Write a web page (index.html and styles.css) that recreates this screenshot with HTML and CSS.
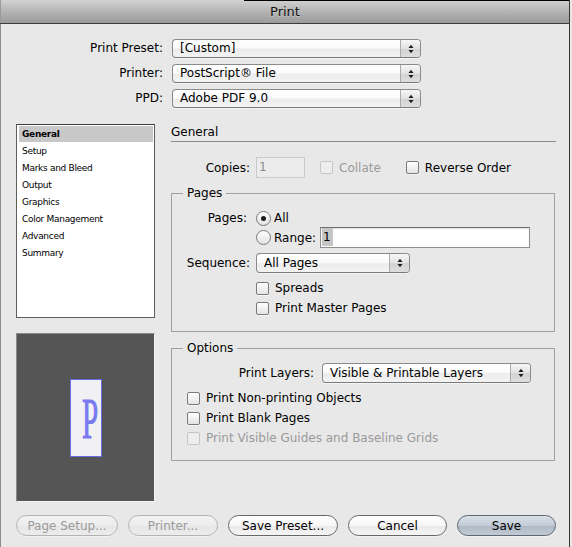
FILE: index.html
```html
<!DOCTYPE html>
<html lang="en">
<head>
<meta charset="utf-8">
<title>Print</title>
<link rel="stylesheet" href="styles.css">
</head>
<body>
<div class="window">
  <div class="titlebar">Print</div>

  <div class="presets">
    <span class="plabel">Print Preset:</span>
    <div class="popup"><span class="popup-text">[Custom]</span><span class="popup-arrows"><svg class="updown" viewBox="0 0 6 10" width="6" height="10"><polygon points="0.5,4 5.5,4 3,0.8"/><polygon points="0.5,6 5.5,6 3,9.2"/></svg></span></div>
    <span class="plabel">Printer:</span>
    <div class="popup"><span class="popup-text">PostScript® File</span><span class="popup-arrows"><svg class="updown" viewBox="0 0 6 10" width="6" height="10"><polygon points="0.5,4 5.5,4 3,0.8"/><polygon points="0.5,6 5.5,6 3,9.2"/></svg></span></div>
    <span class="plabel">PPD:</span>
    <div class="popup"><span class="popup-text">Adobe PDF 9.0</span><span class="popup-arrows"><svg class="updown" viewBox="0 0 6 10" width="6" height="10"><polygon points="0.5,4 5.5,4 3,0.8"/><polygon points="0.5,6 5.5,6 3,9.2"/></svg></span></div>
  </div>

  <div class="main">
    <div class="leftcol">
      <ul class="navlist">
        <li class="selected">General</li>
        <li>Setup</li>
        <li>Marks and Bleed</li>
        <li>Output</li>
        <li>Graphics</li>
        <li>Color Management</li>
        <li>Advanced</li>
        <li>Summary</li>
      </ul>
      <div class="preview">
        <div class="page"><span class="page-glyph">P</span></div>
      </div>
    </div>

    <div class="rightcol">
      <div class="section-title">General</div>

      <div class="copies-row">
        <span class="clabel">Copies:</span>
        <div class="textfield textfield-disabled copies-field">1</div>
        <span class="cb cb-disabled collate-cb"></span>
        <span class="cb-text disabled-text">Collate</span>
        <span class="cb reverse-cb"></span>
        <span class="cb-text">Reverse Order</span>
      </div>

      <fieldset class="group pages-group">
        <legend>Pages</legend>
        <div class="frow frow-pages">
          <span class="flabel flabel-pages">Pages:</span>
          <span class="radio radio-on"></span>
          <span class="radio-text">All</span>
        </div>
        <div class="frow frow-range">
          <span class="flabel"></span>
          <span class="radio"></span>
          <span class="radio-text">Range:</span>
          <div class="textfield range-field"><span class="sel">1</span></div>
        </div>
        <div class="frow frow-seq">
          <span class="flabel">Sequence:</span>
          <div class="popup seq-popup"><span class="popup-text">All Pages</span><span class="popup-arrows"><svg class="updown" viewBox="0 0 6 10" width="6" height="10"><polygon points="0.5,4 5.5,4 3,0.8"/><polygon points="0.5,6 5.5,6 3,9.2"/></svg></span></div>
        </div>
        <div class="frow frow-check frow-spreads">
          <span class="flabel"></span>
          <span class="cb"></span>
          <span class="cb-text">Spreads</span>
        </div>
        <div class="frow frow-check frow-master">
          <span class="flabel"></span>
          <span class="cb"></span>
          <span class="cb-text">Print Master Pages</span>
        </div>
      </fieldset>

      <fieldset class="group options-group">
        <legend>Options</legend>
        <div class="layers-row">
          <span class="layers-label">Print Layers:</span>
          <div class="popup layers-popup"><span class="popup-text">Visible &amp; Printable Layers</span><span class="popup-arrows"><svg class="updown" viewBox="0 0 6 10" width="6" height="10"><polygon points="0.5,4 5.5,4 3,0.8"/><polygon points="0.5,6 5.5,6 3,9.2"/></svg></span></div>
        </div>
        <div class="orow orow-first"><span class="cb"></span><span class="cb-text">Print Non-printing Objects</span></div>
        <div class="orow"><span class="cb"></span><span class="cb-text">Print Blank Pages</span></div>
        <div class="orow"><span class="cb cb-disabled"></span><span class="cb-text disabled-text">Print Visible Guides and Baseline Grids</span></div>
      </fieldset>
    </div>
  </div>

  <div class="buttons">
    <button class="btn btn-disabled btn-pagesetup">Page Setup...</button>
    <button class="btn btn-disabled btn-printer">Printer...</button>
    <button class="btn btn-savepreset">Save Preset...</button>
    <button class="btn btn-cancel">Cancel</button>
    <button class="btn btn-default btn-save">Save</button>
  </div>
</div>
</body>
</html>
```

FILE: styles.css
```css
html, body {
  margin: 0;
  padding: 0;
  background: #e8e8e8;
}

body {
  font-family: "DejaVu Sans", "Liberation Sans", sans-serif;
  font-size: 12px;
  color: #000;
}

.window {
  width: 570px;
  height: 547px;
  background: #e8e8e8;
  box-shadow: inset 1px 0 0 #8c8c8c, inset -1px 0 0 #363636;
  overflow: hidden;
}

/* ---------- title bar ---------- */
.titlebar {
  height: 23px;
  line-height: 23px;
  text-align: center;
  font-size: 13px;
  color: #111;
  text-shadow: 0 1px 0 rgba(255, 255, 255, 0.35);
  border-bottom: 1px solid #3c3c3c;
  background:
    linear-gradient(to right, transparent 244px, #000 244px) top / 100% 1px no-repeat,
    linear-gradient(#d2d2d2, #b4b4b4 50%, #9b9b9b);
  box-shadow: inset 1px 0 0 #9a9a9a, inset -1px 0 0 #363636;
}

/* ---------- preset popups ---------- */
.presets {
  display: grid;
  grid-template-columns: 163px 249px;
  grid-auto-rows: 19px;
  column-gap: 9px;
  row-gap: 6px;
  padding-top: 15px;
}

.plabel {
  text-align: right;
  line-height: 19px;
  white-space: nowrap;
}

.popup {
  display: flex;
  height: 19px;
  box-sizing: border-box;
  border: 1px solid #8a8a8a;
  border-bottom-color: #7a7a7a;
  border-radius: 4px;
  background: linear-gradient(#ffffff, #fbfbfb 45%, #ececec 55%, #f3f3f3);
  box-shadow: 0 1px 0 rgba(255, 255, 255, 0.5);
}

.popup-text {
  flex: 1;
  padding-left: 7px;
  line-height: 17px;
  white-space: nowrap;
  overflow: hidden;
}

.popup-arrows {
  width: 19px;
  flex: none;
  border-left: 1px solid #ababab;
  border-radius: 0 3px 3px 0;
  background: linear-gradient(#f6f6f6, #e2e2e2 50%, #d2d2d2 51%, #dedede);
  display: flex;
  align-items: center;
  justify-content: center;
}

.updown {
  display: block;
  fill: #1e1e1e;
}

/* ---------- main area ---------- */
.main {
  display: flex;
  margin-top: 16px;
  padding-left: 16px;
}

.leftcol {
  width: 139px;
  flex: none;
}

.navlist {
  list-style: none;
  margin: 0;
  padding: 1px 1px 0 2px;
  height: 194px;
  box-sizing: border-box;
  border: 1px solid #5e5e5e;
  border-top-color: #3c3c3c;
  background: #fff;
  font-size: 9px;
  letter-spacing: -0.3px;
}

.navlist li {
  height: 16px;
  line-height: 16px;
  margin-bottom: 1px;
  padding-left: 3px;
  white-space: nowrap;
}

.navlist li.selected {
  background: #c8c8c8;
  font-weight: bold;
}

.preview {
  margin-top: 15px;
  height: 169px;
  box-sizing: border-box;
  border: 1px solid;
  border-color: #8a8a8a #f4f4f4 #f4f4f4 #8a8a8a;
  background: #555555;
  display: flex;
  align-items: center;
  justify-content: center;
}

.page {
  width: 32px;
  height: 78px;
  box-sizing: border-box;
  border: 1px solid #6a6ae6;
  background: #f1f1f3;
  display: flex;
  align-items: center;
  justify-content: center;
}

.page-glyph {
  display: block;
  width: 16px;
  text-align: center;
  font-family: "Liberation Serif", "DejaVu Serif", serif;
  font-size: 58px;
  line-height: 42px;
  height: 42px;
  color: #7a7af0;
  transform: scale(0.5, 1);
  -webkit-text-stroke: 1.2px #7a7af0;
  margin-top: 2px;
}

.rightcol {
  width: 385px;
  margin-left: 16px;
  flex: none;
}

.section-title {
  height: 17px;
  line-height: 17px;
  border-bottom: 1px solid #8b8b8b;
}

/* ---------- copies ---------- */
.copies-row {
  display: flex;
  align-items: center;
  height: 21px;
  margin-top: 15px;
}

.clabel {
  width: 79px;
  text-align: right;
  margin-right: 6px;
  flex: none;
}

.textfield {
  height: 21px;
  box-sizing: border-box;
  border: 1px solid #8f8f8f;
  border-top-color: #6e6e6e;
  background: #fff;
  box-shadow: inset 0 1px 1px rgba(0, 0, 0, 0.12);
  line-height: 19px;
  padding-left: 2px;
  flex: none;
}

.textfield-disabled {
  border-color: #cacaca;
  background: #ececec;
  color: #8a8a8a;
  box-shadow: none;
}

.copies-field {
  width: 49px;
}

.collate-cb {
  margin-left: 15px;
}

.reverse-cb {
  margin-left: 25px;
}

/* ---------- checkboxes & radios ---------- */
.cb {
  width: 13px;
  height: 13px;
  box-sizing: border-box;
  border: 1px solid #7a7a7a;
  border-radius: 2px;
  background: linear-gradient(#ffffff, #f1f1f1 50%, #e4e4e4);
  box-shadow: 0 1px 0 rgba(255, 255, 255, 0.6);
  flex: none;
}

.cb-disabled {
  border-color: #c6c6c6;
  background: #eeeeee;
  box-shadow: none;
}

.cb-text {
  margin-left: 6px;
  white-space: nowrap;
}

.disabled-text {
  color: #9a9a9a;
}

.radio {
  width: 15px;
  height: 15px;
  box-sizing: border-box;
  border: 1px solid #7a7a7a;
  border-radius: 50%;
  background: linear-gradient(#ffffff, #f0f0f0 50%, #e2e2e2);
  flex: none;
  display: flex;
  align-items: center;
  justify-content: center;
}

.radio-on::after {
  content: "";
  width: 5px;
  height: 5px;
  border-radius: 50%;
  background: #1c1c1c;
}

.radio-text {
  margin-left: 3px;
  white-space: nowrap;
}

/* ---------- group boxes ---------- */
.group {
  margin: 0 1px 0 0;
  padding: 9px 0 14px;
  border: 1px solid #a0a0a0;
  min-width: 0;
}

.group legend {
  padding: 0 4px;
  margin-left: 11px;
  line-height: 14px;
  font-size: 12px;
}

.pages-group {
  margin-top: 8px;
}

.options-group {
  margin-top: 9px;
  padding-top: 8px;
  padding-bottom: 12px;
}

.frow {
  display: flex;
  align-items: center;
}

.flabel {
  width: 78px;
  margin-right: 6px;
  text-align: right;
  flex: none;
  white-space: nowrap;
}

.flabel-pages {
  width: 75px;
  margin-right: 9px;
}

.frow-pages {
  height: 18px;
}

.frow-range {
  height: 21px;
}

.range-field {
  width: 210px;
  margin-left: 4px;
  padding-left: 1px;
}

.sel {
  display: inline-block;
  background: #c6c6c6;
  padding: 0 2px 0 1px;
  line-height: 18px;
}

.frow-seq {
  height: 20px;
  margin-top: 5px;
}

.seq-popup {
  width: 154px;
  height: 20px;
}

.seq-popup .popup-text {
  line-height: 18px;
}

.frow-check {
  height: 18px;
}

.frow-spreads {
  margin-top: 6px;
}

.frow-master {
  margin-top: 2px;
}

.layers-row {
  display: flex;
  align-items: center;
  justify-content: flex-end;
  height: 20px;
  padding-right: 23px;
}

.layers-label {
  margin-right: 8px;
  white-space: nowrap;
}

.layers-popup {
  width: 209px;
  height: 20px;
}

.layers-popup .popup-text {
  line-height: 18px;
}

.orow {
  display: flex;
  align-items: center;
  height: 20px;
  padding-left: 15px;
}

.orow-first {
  margin-top: 5px;
}

/* ---------- buttons ---------- */
.buttons {
  display: flex;
  gap: 10px;
  padding-left: 16px;
  margin-top: 13px;
}

.btn {
  height: 21px;
  box-sizing: border-box;
  margin: 0;
  padding: 0;
  border: 1px solid #666;
  border-radius: 11px;
  background: linear-gradient(#ffffff, #f6f6f6 50%, #e9e9e9 51%, #f5f5f5);
  font-family: "DejaVu Sans", "Liberation Sans", sans-serif;
  font-size: 12px;
  color: #000;
  box-shadow: 0 1px 0 rgba(255, 255, 255, 0.5);
}

.btn-disabled {
  border-color: #b3b3b3;
  color: #9a9a9a;
  background: linear-gradient(#f3f3f3, #ececec 50%, #e6e6e6 51%, #ececec);
}

.btn-default {
  border-color: #5e6670;
  background: linear-gradient(#d9e0e8, #c3ccd6 50%, #aeb9c5 51%, #c0cad4);
}

.btn-pagesetup { width: 102px; }
.btn-printer { width: 90px; }
.btn-savepreset { width: 110px; }
.btn-cancel { width: 99px; }
.btn-save { width: 99px; }
```
